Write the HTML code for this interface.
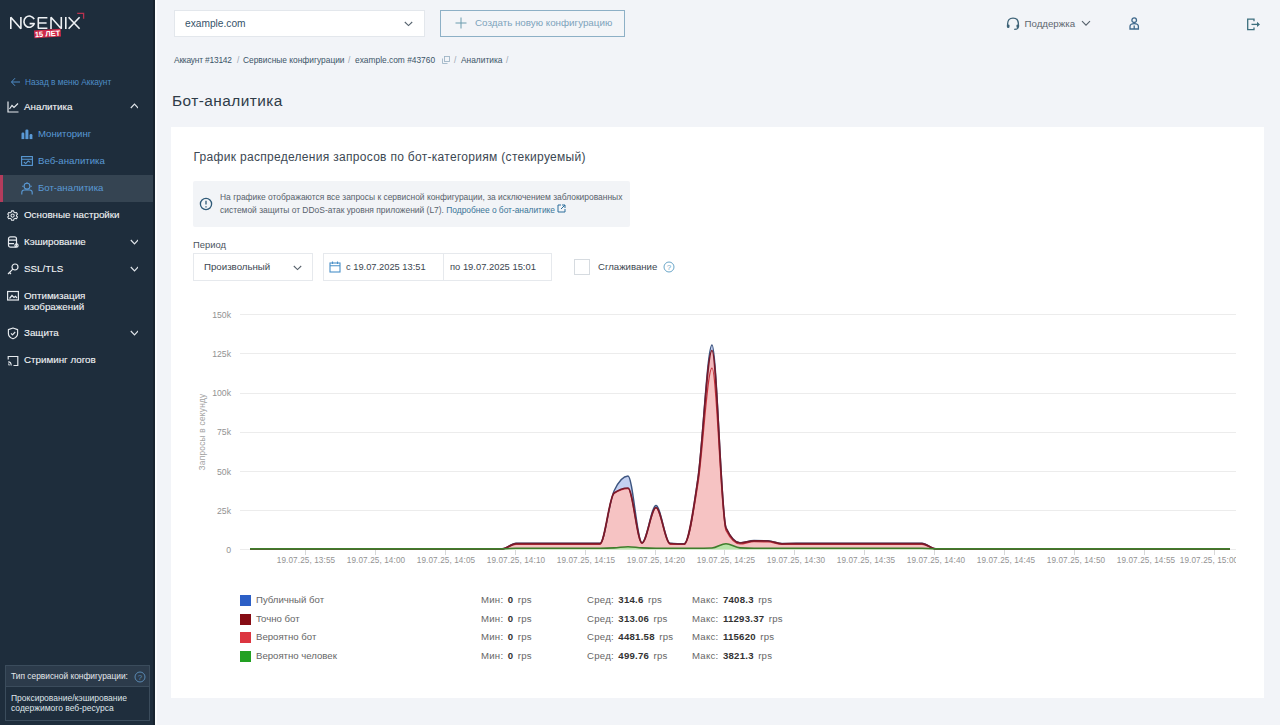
<!DOCTYPE html>
<html><head><meta charset="utf-8">
<style>
*{box-sizing:border-box;margin:0;padding:0}
html,body{width:1280px;height:725px;overflow:hidden;background:#f2f4f8;font-family:"Liberation Sans",sans-serif;}
.abs{position:absolute;white-space:nowrap}
#side{position:absolute;left:0;top:0;width:153px;height:725px;background:#1e2d3c}
#sideedge{position:absolute;left:153px;top:0;width:2px;height:725px;background:#17232f}
#sidegap{position:absolute;left:155px;top:0;width:2px;height:725px;background:#fbfcfd}
.nav{position:absolute;left:24px;font-size:9.8px;font-weight:400;color:#f2f4f6;line-height:12px;-webkit-text-stroke:0.1px #f2f4f6}
.sub{position:absolute;left:38px;font-size:9.6px;color:#5a9ad6;line-height:12px}
.ico{position:absolute}
.chev{position:absolute;left:130px;width:8px;height:8px}
.crumb{position:absolute;top:55px;font-size:8.4px;color:#3c5468;line-height:11px}
.sep{position:absolute;top:55px;font-size:8.4px;color:#9aa6b0;line-height:11px}
</style></head><body>
<div id="side"></div><div id="sideedge"></div><div id="sidegap"></div>

<!-- logo -->
<svg class="ico" style="left:0;top:0" width="100" height="45">
<g fill="none" stroke="#eef1f4" stroke-width="1.6" stroke-linejoin="bevel">
<path d="M10.8,29V17.3L20.9,28.7V17"/>
<path d="M34.2,19.2A5.4,5.6 0 1 0 34.4,23.6H29.6"/>
<path d="M47.4,17.75H38.3V28.25H47.4M38.3,23H46.6"/>
<path d="M51,29V17.3L61.3,28.7V17"/>
<path d="M65.8,17V29"/>
<path d="M68.6,17.2L79.6,28.8M79.6,17.2L68.6,28.8"/>
</g>
<path d="M77.2,13.4H83.6V18.8" fill="none" stroke="#b8324e" stroke-width="1.3"/>
<g transform="translate(47.5,33.5) rotate(-3.5)"><rect x="-13.3" y="-3.9" width="26.6" height="7.8" fill="#cf2a4a"/>
<text x="0" y="2.9" font-family="Liberation Sans" font-size="7.6" font-weight="700" fill="#fff" text-anchor="middle">15 ЛЕТ</text></g>
</svg>
<!-- back link -->
<svg class="ico" style="left:10px;top:77px" width="11" height="10"><path d="M1.5,5H10M5,1.2L1.5,5L5,8.8" fill="none" stroke="#4f8dc8" stroke-width="1"/></svg>
<div class="abs" style="left:25px;top:76.5px;font-size:8.3px;color:#4f8dc8;line-height:11px">Назад в меню Аккаунт</div>

<!-- Analytics -->
<svg class="ico" style="left:7px;top:101px" width="12" height="12"><path d="M1,0.5V11H11.5" fill="none" stroke="#e6eaee" stroke-width="1.2"/><path d="M2.5,8L5,4.5L7,6.5L11,2.5" fill="none" stroke="#e6eaee" stroke-width="1.2"/></svg>
<div class="nav" style="top:101px">Аналитика</div>
<svg class="chev" style="top:103px" width="9" height="6"><path d="M0.8,5L4.5,1.2L8.2,5" fill="none" stroke="#dfe4e9" stroke-width="1.2"/></svg>

<svg class="ico" style="left:21px;top:129px" width="12" height="11"><g fill="#5a9ad6"><rect x="0.5" y="3.5" width="2.8" height="7" rx="1.2"/><rect x="4.4" y="0.5" width="3" height="10" rx="1.2"/><rect x="8.6" y="5" width="2.8" height="5.5" rx="1.2"/></g><path d="M1,10.5H11" stroke="#1e2d3c" stroke-width="0.8"/></svg>
<div class="sub" style="top:128px">Мониторинг</div>

<svg class="ico" style="left:21px;top:155px" width="12" height="12"><g fill="none" stroke="#5a9ad6" stroke-width="1.1"><rect x="0.6" y="1.6" width="10.8" height="8.8"/><path d="M0.6,4.2H11.4M2.8,7L4.8,8.6L7.2,6L9.4,7.4"/></g></svg>
<div class="sub" style="top:155px">Веб-аналитика</div>

<div class="abs" style="left:0;top:175px;width:153px;height:27px;background:#354452"></div>
<div class="abs" style="left:0;top:175px;width:2.5px;height:27px;background:#b33c5c"></div>
<svg class="ico" style="left:21px;top:182px" width="12" height="13"><g fill="none" stroke="#5a9ad6" stroke-width="1.1"><circle cx="6" cy="4.2" r="2.9"/><path d="M2.6,4.2H1.2M9.4,4.2H10.8M6,1.3V0.2"/><path d="M0.8,12.5V10.5Q0.8,8 3.3,8H8.7Q11.2,8 11.2,10.5V12.5"/></g></svg>
<div class="sub" style="top:182px">Бот-аналитика</div>

<svg class="ico" style="left:6px;top:209px" width="13" height="13"><g fill="none" stroke="#e6eaee" stroke-width="1.2" stroke-linejoin="round" transform="translate(6.6,6.6) scale(0.86) translate(-6.5,-6.5)"><path d="M5.3,1H7.7L8.1,2.6L9.4,3.3L11,2.8L12.2,4.9L11,6L11,7.1L12.2,8.1L11,10.2L9.4,9.7L8.1,10.4L7.7,12H5.3L4.9,10.4L3.6,9.7L2,10.2L0.8,8.1L2,7.1L2,6L0.8,4.9L2,2.8L3.6,3.3L4.9,2.6Z"/><circle cx="6.5" cy="6.5" r="1.9"/></g></svg>
<div class="nav" style="top:209px">Основные настройки</div>

<svg class="ico" style="left:7px;top:236px" width="12" height="12"><g fill="none" stroke="#e6eaee" stroke-width="1.2"><rect x="1.5" y="0.8" width="8" height="10.4" rx="2"/><path d="M1.5,4.2H9.5M1.5,7.6H7"/><circle cx="9.5" cy="9.5" r="1.6"/></g></svg>
<div class="nav" style="top:236px">Кэширование</div>
<svg class="chev" style="top:239px" width="9" height="6"><path d="M0.8,1L4.5,4.8L8.2,1" fill="none" stroke="#dfe4e9" stroke-width="1.2"/></svg>

<svg class="ico" style="left:7px;top:263px" width="12" height="12"><g fill="none" stroke="#e6eaee" stroke-width="1.2"><circle cx="8" cy="4" r="3"/><path d="M5.8,6.2L1,11M2.5,9.5L4,11"/></g></svg>
<div class="nav" style="top:263px">SSL/TLS</div>
<svg class="chev" style="top:266px" width="9" height="6"><path d="M0.8,1L4.5,4.8L8.2,1" fill="none" stroke="#dfe4e9" stroke-width="1.2"/></svg>

<svg class="ico" style="left:7px;top:290px" width="12" height="12"><g fill="none" stroke="#e6eaee" stroke-width="1.2"><rect x="0.6" y="1.5" width="10.8" height="8.5"/><path d="M2.5,8.5L5,5.5L7,7.5L8.5,6.3L10,8"/></g></svg>
<div class="nav" style="top:289.6px;line-height:11px">Оптимизация<br>изображений</div>

<svg class="ico" style="left:7px;top:327px" width="12" height="13"><path d="M6,1L10.6,2.6V6.5Q10.6,10.2 6,11.8Q1.4,10.2 1.4,6.5V2.6Z M4,6.4L5.5,7.9L8.2,5" fill="none" stroke="#e6eaee" stroke-width="1.15" stroke-linejoin="round"/></svg>
<div class="nav" style="top:327px">Защита</div>
<svg class="chev" style="top:330px" width="9" height="6"><path d="M0.8,1L4.5,4.8L8.2,1" fill="none" stroke="#dfe4e9" stroke-width="1.2"/></svg>

<svg class="ico" style="left:7px;top:355px" width="12" height="12"><g fill="none" stroke="#e6eaee" stroke-width="1.15"><path d="M1.2,4.5V1.5H10.8V10.5H6.5"/><path d="M1.2,6.8Q4.2,6.8 4.2,10.5M1.2,8.8Q2.2,8.8 2.2,10.5"/></g></svg>
<div class="nav" style="top:354px">Стриминг логов</div>

<!-- service type box -->
<div class="abs" style="left:5px;top:665px;width:145px;height:56px;border:1px solid #3b4c5c;background:#1f2e3d"></div>
<div class="abs" style="left:6px;top:666px;width:143px;height:21px;background:#2c3b4b;border-bottom:1px solid #3b4c5c"></div>
<div class="abs" style="left:11px;top:671px;font-size:8.4px;color:#e4e8ec;line-height:11px">Тип сервисной конфигурации:</div>
<svg class="ico" style="left:134px;top:671px" width="12" height="12"><circle cx="6" cy="6" r="5" fill="none" stroke="#5a8ab4" stroke-width="1"/><text x="6" y="8.8" font-size="8" text-anchor="middle" fill="#5a8ab4" font-family="Liberation Sans">?</text></svg>
<div class="abs" style="left:11px;top:692.5px;font-size:8.5px;color:#dfe4e9;line-height:10.5px">Проксирование/кэширование<br>содержимого веб-ресурса</div>

<!-- top bar -->
<div class="abs" style="left:174px;top:10px;width:251px;height:27px;background:#fff;border:1px solid #e3e7ec"></div>
<div class="abs" style="left:185px;top:17.5px;font-size:10.2px;color:#35536a;line-height:12px">example.com</div>
<svg class="ico" style="left:404px;top:21px" width="9" height="6"><path d="M0.8,1L4.5,4.6L8.2,1" fill="none" stroke="#56636e" stroke-width="1.1"/></svg>

<div class="abs" style="left:440px;top:10px;width:185px;height:27px;border:1px solid #8db0c6;background:#f3f5f8"></div>
<svg class="ico" style="left:455px;top:17px" width="12" height="12"><path d="M6,0.5V11.5M0.5,6H11.5" stroke="#6a9cae" stroke-width="1"/></svg>
<div class="abs" style="left:475px;top:17px;font-size:9.8px;color:#7da3bc;line-height:12px">Создать новую конфигурацию</div>

<svg class="ico" style="left:1006px;top:17px" width="14" height="14"><g fill="none" stroke="#3d6277" stroke-width="1.3"><path d="M1.6,9.5V7Q1.6,1.2 7,1.2Q12.4,1.2 12.4,7V9.5"/><path d="M12.2,10.5Q12,12.3 8.2,12.3"/></g><g fill="#3d6277"><rect x="0.9" y="7.4" width="2.6" height="3.6" rx="1.2"/><rect x="10.5" y="7.4" width="2.6" height="3.6" rx="1.2"/></g></svg>
<div class="abs" style="left:1024.5px;top:17.6px;font-size:9.7px;color:#5e6770;line-height:12px">Поддержка</div>
<svg class="ico" style="left:1081px;top:20px" width="10" height="7"><path d="M1,1.2L5,5.2L9,1.2" fill="none" stroke="#55606b" stroke-width="1.1"/></svg>
<svg class="ico" style="left:1129px;top:17px" width="11" height="13"><g fill="none" stroke="#40698c" stroke-width="1.3"><circle cx="5.2" cy="3.2" r="2.3"/><path d="M1,12V9.5Q1,6.6 5.2,6.6Q9.4,6.6 9.4,9.5V12ZM5.2,8.5V12"/></g></svg>
<svg class="ico" style="left:1246px;top:18px" width="15" height="13"><g fill="none" stroke="#3d6f7e" stroke-width="1.3"><path d="M8,3.2V1.2H1.7V11.6H8V9.5"/><path d="M5.5,6.4H12.5"/></g><path d="M11,3.8L14,6.4L11,9Z" fill="#3d6f7e"/></svg>

<!-- breadcrumbs -->
<div class="crumb" style="left:174px;letter-spacing:-0.2px">Аккаунт #13142</div>
<div class="sep" style="left:237px">/</div>
<div class="crumb" style="left:243px">Сервисные конфигурации</div>
<div class="sep" style="left:348px">/</div>
<div class="crumb" style="left:355px">example.com #43760</div>
<svg class="ico" style="left:442px;top:56px" width="8" height="8"><g fill="none" stroke="#9fb6c6" stroke-width="0.9"><rect x="2.5" y="0.5" width="5" height="5"/><path d="M0.5,2.5V7.5H5.5"/></g></svg>
<div class="sep" style="left:454px">/</div>
<div class="crumb" style="left:461px">Аналитика</div>
<div class="sep" style="left:506px">/</div>

<div class="abs" style="left:172px;top:90.6px;font-size:15.4px;letter-spacing:0.45px;color:#2f3c48;line-height:19px">Бот-аналитика</div>

<!-- card -->
<div class="abs" style="left:171px;top:127px;width:1093px;height:571px;background:#fff"></div>
<div class="abs" style="left:193.5px;top:149.6px;font-size:12px;letter-spacing:0.3px;color:#3c4853;line-height:15px">График распределения запросов по бот-категориям (стекируемый)</div>

<div class="abs" style="left:193px;top:181px;width:437px;height:46px;background:#f2f4f7;border-radius:2px"></div>
<svg class="ico" style="left:199px;top:197px" width="14" height="14"><circle cx="7" cy="7" r="5.6" fill="none" stroke="#2f5a78" stroke-width="1.3"/><path d="M7,3.8V7.6M7,9.2V10.4" stroke="#2f5a78" stroke-width="1.3"/></svg>
<div class="abs" style="left:220px;top:191.4px;font-size:8.45px;color:#58626c;line-height:12.2px">На графике отображаются все запросы к сервисной конфигурации, за исключением заблокированных<br>системой защиты от DDoS-атак уровня приложений (L7). <span style="color:#3a7498;letter-spacing:-0.05px">Подробнее о бот-аналитике</span></div>
<svg class="ico" style="left:557px;top:204px" width="9" height="9"><g fill="none" stroke="#2d6f9c" stroke-width="1"><path d="M4,1H1V8H8V5"/><path d="M5,1H8V4M8,1L4,5"/></g></svg>

<div class="abs" style="left:193px;top:239px;font-size:9.4px;color:#4a545e;line-height:12px">Период</div>
<div class="abs" style="left:193px;top:253px;width:120px;height:28px;border:1px solid #e6e9ed;background:#fff"></div>
<div class="abs" style="left:204px;top:261px;font-size:9.7px;color:#3c4650;line-height:12px">Произвольный</div>
<svg class="ico" style="left:292.5px;top:264.5px" width="9" height="6"><path d="M0.8,1L4.5,4.6L8.2,1" fill="none" stroke="#56606a" stroke-width="1.05"/></svg>

<div class="abs" style="left:323px;top:253px;width:229px;height:28px;border:1px solid #e6e9ed;background:#fff"></div>
<div class="abs" style="left:443px;top:254px;width:1px;height:26px;background:#e6e9ed"></div>
<svg class="ico" style="left:329px;top:261px" width="12" height="12"><g fill="none" stroke="#4a90c8" stroke-width="1.1"><rect x="1" y="2" width="10" height="9"/><path d="M1,4.8H11M3.5,0.5V3M8.5,0.5V3"/></g></svg>
<div class="abs" style="left:346px;top:261px;font-size:9.3px;color:#3c4650;line-height:12px">с 19.07.2025 13:51</div>
<div class="abs" style="left:450px;top:261px;font-size:9.4px;color:#3c4650;line-height:12px">по 19.07.2025 15:01</div>

<div class="abs" style="left:574px;top:259px;width:16px;height:16px;border:1px solid #d6dbe0;background:#fff"></div>
<div class="abs" style="left:598px;top:261px;font-size:9.6px;color:#3c4650;line-height:12px">Сглаживание</div>
<svg class="ico" style="left:663px;top:261px" width="12" height="12"><circle cx="6" cy="6" r="5" fill="none" stroke="#6aa6c8" stroke-width="1"/><text x="6" y="8.8" font-size="8" text-anchor="middle" fill="#6aa6c8" font-family="Liberation Sans">?</text></svg>

<!-- chart -->
<svg class="ico" style="left:0;top:0" width="1280" height="725">
<g stroke="#ececec" stroke-width="1">
<path d="M240,314.5H1236M240,353.5H1236M240,393.5H1236M240,432.5H1236M240,471.5H1236M240,510.5H1236M240,549.5H1236"/>
</g>
<g font-family="Liberation Sans" font-size="8.7" fill="#929292" text-anchor="end">
<text x="231" y="317.5">150k</text><text x="231" y="356.8">125k</text><text x="231" y="396">100k</text><text x="231" y="435.3">75k</text><text x="231" y="474.5">50k</text><text x="231" y="513.8">25k</text><text x="231" y="553">0</text>
</g>
<text transform="translate(205,432) rotate(-90)" font-family="Liberation Sans" font-size="8.3" letter-spacing="0.25" fill="#a3a3a3" text-anchor="middle">Запросы в секунду</text>
<g stroke="#d8d8d8" stroke-width="1">
<path d="M305.5,550V555M375.5,550V555M445.5,550V555M515.5,550V555M585.5,550V555M655.5,550V555M724.5,550V555M794.5,550V555M864.5,550V555M934.5,550V555M1004.5,550V555M1074.5,550V555M1144.5,550V555M1214.5,550V555"/>
</g>
<defs><clipPath id="cp"><rect x="171" y="300" width="1065" height="280"/></clipPath></defs>
<g font-family="Liberation Sans" font-size="8.2" letter-spacing="0.1" fill="#939393" text-anchor="middle" clip-path="url(#cp)">
<text x="306" y="562.5">19.07.25, 13:55</text><text x="376" y="562.5">19.07.25, 14:00</text><text x="446" y="562.5">19.07.25, 14:05</text><text x="516" y="562.5">19.07.25, 14:10</text><text x="586" y="562.5">19.07.25, 14:15</text><text x="656" y="562.5">19.07.25, 14:20</text><text x="726" y="562.5">19.07.25, 14:25</text><text x="796" y="562.5">19.07.25, 14:30</text><text x="866" y="562.5">19.07.25, 14:35</text><text x="936" y="562.5">19.07.25, 14:40</text><text x="1006" y="562.5">19.07.25, 14:45</text><text x="1076" y="562.5">19.07.25, 14:50</text><text x="1146" y="562.5">19.07.25, 14:55</text><text x="1209" y="562.5">19.07.25, 15:00</text>
</g>
<path d="M250.0,548.9C254.7,548.9 259.3,548.9 264.0,548.9C268.7,548.9 273.3,548.9 278.0,548.9C282.7,548.9 287.3,548.9 292.0,548.9C296.7,548.9 301.3,548.9 306.0,548.9C310.7,548.9 315.3,548.9 320.0,548.9C324.7,548.9 329.3,548.9 334.0,548.9C338.7,548.9 343.3,548.9 348.0,548.9C352.7,548.9 357.3,548.9 362.0,548.9C366.7,548.9 371.3,548.9 376.0,548.9C380.7,548.9 385.3,548.9 390.0,548.9C394.7,548.9 399.3,548.9 404.0,548.9C408.7,548.9 413.3,548.9 418.0,548.9C422.7,548.9 427.3,548.9 432.0,548.9C436.7,548.9 441.3,548.9 446.0,548.9C450.7,548.9 455.3,548.9 460.0,548.9C464.7,548.9 469.3,548.9 474.0,548.9C478.7,548.9 483.3,548.9 488.0,548.9C492.7,548.9 497.3,548.9 502.0,548.9C506.7,548.9 511.3,543.3 516.0,543.3C520.7,543.3 525.3,543.3 530.0,543.3C534.7,543.3 539.3,543.3 544.0,543.3C548.7,543.3 553.3,543.3 558.0,543.3C562.7,543.3 567.3,543.3 572.0,543.3C576.7,543.3 581.3,543.3 586.0,543.3C590.7,543.3 595.3,543.3 600.0,543.3C604.7,543.3 609.3,501.0 614.0,491.0C618.7,481.0 623.3,476.0 628.0,476.0C632.7,476.0 637.3,542.7 642.0,542.7C646.7,542.7 651.3,505.5 656.0,505.5C660.7,505.5 665.3,542.9 670.0,543.2C674.7,543.5 679.3,543.7 684.0,543.7C688.7,543.7 693.3,511.3 698.0,478.2C702.7,445.1 707.3,345.0 712.0,345.0C716.7,345.0 721.3,517.7 726.0,527.7C730.7,537.7 735.3,542.7 740.0,542.7C744.7,542.7 749.3,540.5 754.0,540.5C758.7,540.5 763.3,540.6 768.0,540.7C772.7,540.8 777.3,543.5 782.0,543.5C786.7,543.5 791.3,543.3 796.0,543.3C800.7,543.3 805.3,543.3 810.0,543.3C814.7,543.3 819.3,543.3 824.0,543.3C828.7,543.3 833.3,543.3 838.0,543.3C842.7,543.3 847.3,543.3 852.0,543.3C856.7,543.3 861.3,543.3 866.0,543.3C870.7,543.3 875.3,543.3 880.0,543.3C884.7,543.3 889.3,543.3 894.0,543.3C898.7,543.3 903.3,543.3 908.0,543.3C912.7,543.3 917.3,543.3 922.0,543.3C926.7,543.3 931.3,548.9 936.0,548.9C940.7,548.9 945.3,548.9 950.0,548.9C954.7,548.9 959.3,548.9 964.0,548.9C968.7,548.9 973.3,548.9 978.0,548.9C982.7,548.9 987.3,548.9 992.0,548.9C996.7,548.9 1001.3,548.9 1006.0,548.9C1010.7,548.9 1015.3,548.9 1020.0,548.9C1024.7,548.9 1029.3,548.9 1034.0,548.9C1038.7,548.9 1043.3,548.9 1048.0,548.9C1052.7,548.9 1057.3,548.9 1062.0,548.9C1066.7,548.9 1071.3,548.9 1076.0,548.9C1080.7,548.9 1085.3,548.9 1090.0,548.9C1094.7,548.9 1099.3,548.9 1104.0,548.9C1108.7,548.9 1113.3,548.9 1118.0,548.9C1122.7,548.9 1127.3,548.9 1132.0,548.9C1136.7,548.9 1141.3,548.9 1146.0,548.9C1150.7,548.9 1155.3,548.9 1160.0,548.9C1164.7,548.9 1169.3,548.9 1174.0,548.9C1178.7,548.9 1183.3,548.9 1188.0,548.9C1192.7,548.9 1197.3,548.9 1202.0,548.9C1206.7,548.9 1211.3,548.9 1216.0,548.9C1220.7,548.9 1225.3,548.9 1230.0,548.9L1230.0,548.9C1225.3,548.9 1220.7,548.9 1216.0,548.9C1211.3,548.9 1206.7,548.9 1202.0,548.9C1197.3,548.9 1192.7,548.9 1188.0,548.9C1183.3,548.9 1178.7,548.9 1174.0,548.9C1169.3,548.9 1164.7,548.9 1160.0,548.9C1155.3,548.9 1150.7,548.9 1146.0,548.9C1141.3,548.9 1136.7,548.9 1132.0,548.9C1127.3,548.9 1122.7,548.9 1118.0,548.9C1113.3,548.9 1108.7,548.9 1104.0,548.9C1099.3,548.9 1094.7,548.9 1090.0,548.9C1085.3,548.9 1080.7,548.9 1076.0,548.9C1071.3,548.9 1066.7,548.9 1062.0,548.9C1057.3,548.9 1052.7,548.9 1048.0,548.9C1043.3,548.9 1038.7,548.9 1034.0,548.9C1029.3,548.9 1024.7,548.9 1020.0,548.9C1015.3,548.9 1010.7,548.9 1006.0,548.9C1001.3,548.9 996.7,548.9 992.0,548.9C987.3,548.9 982.7,548.9 978.0,548.9C973.3,548.9 968.7,548.9 964.0,548.9C959.3,548.9 954.7,548.9 950.0,548.9C945.3,548.9 940.7,548.9 936.0,548.9C931.3,548.9 926.7,543.6 922.0,543.6C917.3,543.6 912.7,543.6 908.0,543.6C903.3,543.6 898.7,543.6 894.0,543.6C889.3,543.6 884.7,543.6 880.0,543.6C875.3,543.6 870.7,543.6 866.0,543.6C861.3,543.6 856.7,543.6 852.0,543.6C847.3,543.6 842.7,543.6 838.0,543.6C833.3,543.6 828.7,543.6 824.0,543.6C819.3,543.6 814.7,543.6 810.0,543.6C805.3,543.6 800.7,543.6 796.0,543.6C791.3,543.6 786.7,543.8 782.0,543.8C777.3,543.8 772.7,541.1 768.0,541.0C763.3,540.9 758.7,540.8 754.0,540.8C749.3,540.8 744.7,543.0 740.0,543.0C735.3,543.0 730.7,538.0 726.0,528.0C721.3,518.0 716.7,350.5 712.0,350.5C707.3,350.5 702.7,446.2 698.0,478.5C693.3,510.8 688.7,544.0 684.0,544.0C679.3,544.0 674.7,543.8 670.0,543.5C665.3,543.2 660.7,507.5 656.0,507.5C651.3,507.5 646.7,543.0 642.0,543.0C637.3,543.0 632.7,488.0 628.0,488.0C623.3,488.0 618.7,489.7 614.0,493.0C609.3,496.3 604.7,543.6 600.0,543.6C595.3,543.6 590.7,543.6 586.0,543.6C581.3,543.6 576.7,543.6 572.0,543.6C567.3,543.6 562.7,543.6 558.0,543.6C553.3,543.6 548.7,543.6 544.0,543.6C539.3,543.6 534.7,543.6 530.0,543.6C525.3,543.6 520.7,543.6 516.0,543.6C511.3,543.6 506.7,548.9 502.0,548.9C497.3,548.9 492.7,548.9 488.0,548.9C483.3,548.9 478.7,548.9 474.0,548.9C469.3,548.9 464.7,548.9 460.0,548.9C455.3,548.9 450.7,548.9 446.0,548.9C441.3,548.9 436.7,548.9 432.0,548.9C427.3,548.9 422.7,548.9 418.0,548.9C413.3,548.9 408.7,548.9 404.0,548.9C399.3,548.9 394.7,548.9 390.0,548.9C385.3,548.9 380.7,548.9 376.0,548.9C371.3,548.9 366.7,548.9 362.0,548.9C357.3,548.9 352.7,548.9 348.0,548.9C343.3,548.9 338.7,548.9 334.0,548.9C329.3,548.9 324.7,548.9 320.0,548.9C315.3,548.9 310.7,548.9 306.0,548.9C301.3,548.9 296.7,548.9 292.0,548.9C287.3,548.9 282.7,548.9 278.0,548.9C273.3,548.9 268.7,548.9 264.0,548.9C259.3,548.9 254.7,548.9 250.0,548.9Z" fill="#c4d0f0"/>
<path d="M250.0,548.9C254.7,548.9 259.3,548.9 264.0,548.9C268.7,548.9 273.3,548.9 278.0,548.9C282.7,548.9 287.3,548.9 292.0,548.9C296.7,548.9 301.3,548.9 306.0,548.9C310.7,548.9 315.3,548.9 320.0,548.9C324.7,548.9 329.3,548.9 334.0,548.9C338.7,548.9 343.3,548.9 348.0,548.9C352.7,548.9 357.3,548.9 362.0,548.9C366.7,548.9 371.3,548.9 376.0,548.9C380.7,548.9 385.3,548.9 390.0,548.9C394.7,548.9 399.3,548.9 404.0,548.9C408.7,548.9 413.3,548.9 418.0,548.9C422.7,548.9 427.3,548.9 432.0,548.9C436.7,548.9 441.3,548.9 446.0,548.9C450.7,548.9 455.3,548.9 460.0,548.9C464.7,548.9 469.3,548.9 474.0,548.9C478.7,548.9 483.3,548.9 488.0,548.9C492.7,548.9 497.3,548.9 502.0,548.9C506.7,548.9 511.3,543.6 516.0,543.6C520.7,543.6 525.3,543.6 530.0,543.6C534.7,543.6 539.3,543.6 544.0,543.6C548.7,543.6 553.3,543.6 558.0,543.6C562.7,543.6 567.3,543.6 572.0,543.6C576.7,543.6 581.3,543.6 586.0,543.6C590.7,543.6 595.3,543.6 600.0,543.6C604.7,543.6 609.3,496.3 614.0,493.0C618.7,489.7 623.3,488.0 628.0,488.0C632.7,488.0 637.3,543.0 642.0,543.0C646.7,543.0 651.3,507.5 656.0,507.5C660.7,507.5 665.3,543.2 670.0,543.5C674.7,543.8 679.3,544.0 684.0,544.0C688.7,544.0 693.3,510.8 698.0,478.5C702.7,446.2 707.3,350.5 712.0,350.5C716.7,350.5 721.3,518.0 726.0,528.0C730.7,538.0 735.3,543.0 740.0,543.0C744.7,543.0 749.3,540.8 754.0,540.8C758.7,540.8 763.3,540.9 768.0,541.0C772.7,541.1 777.3,543.8 782.0,543.8C786.7,543.8 791.3,543.6 796.0,543.6C800.7,543.6 805.3,543.6 810.0,543.6C814.7,543.6 819.3,543.6 824.0,543.6C828.7,543.6 833.3,543.6 838.0,543.6C842.7,543.6 847.3,543.6 852.0,543.6C856.7,543.6 861.3,543.6 866.0,543.6C870.7,543.6 875.3,543.6 880.0,543.6C884.7,543.6 889.3,543.6 894.0,543.6C898.7,543.6 903.3,543.6 908.0,543.6C912.7,543.6 917.3,543.6 922.0,543.6C926.7,543.6 931.3,548.9 936.0,548.9C940.7,548.9 945.3,548.9 950.0,548.9C954.7,548.9 959.3,548.9 964.0,548.9C968.7,548.9 973.3,548.9 978.0,548.9C982.7,548.9 987.3,548.9 992.0,548.9C996.7,548.9 1001.3,548.9 1006.0,548.9C1010.7,548.9 1015.3,548.9 1020.0,548.9C1024.7,548.9 1029.3,548.9 1034.0,548.9C1038.7,548.9 1043.3,548.9 1048.0,548.9C1052.7,548.9 1057.3,548.9 1062.0,548.9C1066.7,548.9 1071.3,548.9 1076.0,548.9C1080.7,548.9 1085.3,548.9 1090.0,548.9C1094.7,548.9 1099.3,548.9 1104.0,548.9C1108.7,548.9 1113.3,548.9 1118.0,548.9C1122.7,548.9 1127.3,548.9 1132.0,548.9C1136.7,548.9 1141.3,548.9 1146.0,548.9C1150.7,548.9 1155.3,548.9 1160.0,548.9C1164.7,548.9 1169.3,548.9 1174.0,548.9C1178.7,548.9 1183.3,548.9 1188.0,548.9C1192.7,548.9 1197.3,548.9 1202.0,548.9C1206.7,548.9 1211.3,548.9 1216.0,548.9C1220.7,548.9 1225.3,548.9 1230.0,548.9L1230.0,548.9C1225.3,548.9 1220.7,548.9 1216.0,548.9C1211.3,548.9 1206.7,548.9 1202.0,548.9C1197.3,548.9 1192.7,548.9 1188.0,548.9C1183.3,548.9 1178.7,548.9 1174.0,548.9C1169.3,548.9 1164.7,548.9 1160.0,548.9C1155.3,548.9 1150.7,548.9 1146.0,548.9C1141.3,548.9 1136.7,548.9 1132.0,548.9C1127.3,548.9 1122.7,548.9 1118.0,548.9C1113.3,548.9 1108.7,548.9 1104.0,548.9C1099.3,548.9 1094.7,548.9 1090.0,548.9C1085.3,548.9 1080.7,548.9 1076.0,548.9C1071.3,548.9 1066.7,548.9 1062.0,548.9C1057.3,548.9 1052.7,548.9 1048.0,548.9C1043.3,548.9 1038.7,548.9 1034.0,548.9C1029.3,548.9 1024.7,548.9 1020.0,548.9C1015.3,548.9 1010.7,548.9 1006.0,548.9C1001.3,548.9 996.7,548.9 992.0,548.9C987.3,548.9 982.7,548.9 978.0,548.9C973.3,548.9 968.7,548.9 964.0,548.9C959.3,548.9 954.7,548.9 950.0,548.9C945.3,548.9 940.7,548.9 936.0,548.9C931.3,548.9 926.7,544.3 922.0,544.3C917.3,544.3 912.7,544.3 908.0,544.3C903.3,544.3 898.7,544.3 894.0,544.3C889.3,544.3 884.7,544.3 880.0,544.3C875.3,544.3 870.7,544.3 866.0,544.3C861.3,544.3 856.7,544.3 852.0,544.3C847.3,544.3 842.7,544.3 838.0,544.3C833.3,544.3 828.7,544.3 824.0,544.3C819.3,544.3 814.7,544.3 810.0,544.3C805.3,544.3 800.7,544.3 796.0,544.3C791.3,544.3 786.7,544.5 782.0,544.5C777.3,544.5 772.7,542.0 768.0,541.9C763.3,541.8 758.7,541.7 754.0,541.7C749.3,541.7 744.7,544.0 740.0,544.0C735.3,544.0 730.7,539.5 726.0,530.5C721.3,521.5 716.7,368.0 712.0,368.0C707.3,368.0 702.7,454.1 698.0,483.5C693.3,512.9 688.7,544.5 684.0,544.5C679.3,544.5 674.7,544.4 670.0,544.3C665.3,544.2 660.7,508.0 656.0,508.0C651.3,508.0 646.7,543.3 642.0,543.3C637.3,543.3 632.7,488.7 628.0,488.7C623.3,488.7 618.7,490.3 614.0,493.5C609.3,496.7 604.7,544.3 600.0,544.3C595.3,544.3 590.7,544.3 586.0,544.3C581.3,544.3 576.7,544.3 572.0,544.3C567.3,544.3 562.7,544.3 558.0,544.3C553.3,544.3 548.7,544.3 544.0,544.3C539.3,544.3 534.7,544.3 530.0,544.3C525.3,544.3 520.7,544.3 516.0,544.3C511.3,544.3 506.7,548.9 502.0,548.9C497.3,548.9 492.7,548.9 488.0,548.9C483.3,548.9 478.7,548.9 474.0,548.9C469.3,548.9 464.7,548.9 460.0,548.9C455.3,548.9 450.7,548.9 446.0,548.9C441.3,548.9 436.7,548.9 432.0,548.9C427.3,548.9 422.7,548.9 418.0,548.9C413.3,548.9 408.7,548.9 404.0,548.9C399.3,548.9 394.7,548.9 390.0,548.9C385.3,548.9 380.7,548.9 376.0,548.9C371.3,548.9 366.7,548.9 362.0,548.9C357.3,548.9 352.7,548.9 348.0,548.9C343.3,548.9 338.7,548.9 334.0,548.9C329.3,548.9 324.7,548.9 320.0,548.9C315.3,548.9 310.7,548.9 306.0,548.9C301.3,548.9 296.7,548.9 292.0,548.9C287.3,548.9 282.7,548.9 278.0,548.9C273.3,548.9 268.7,548.9 264.0,548.9C259.3,548.9 254.7,548.9 250.0,548.9Z" fill="#f2b8bc"/>
<path d="M250.0,548.9C254.7,548.9 259.3,548.9 264.0,548.9C268.7,548.9 273.3,548.9 278.0,548.9C282.7,548.9 287.3,548.9 292.0,548.9C296.7,548.9 301.3,548.9 306.0,548.9C310.7,548.9 315.3,548.9 320.0,548.9C324.7,548.9 329.3,548.9 334.0,548.9C338.7,548.9 343.3,548.9 348.0,548.9C352.7,548.9 357.3,548.9 362.0,548.9C366.7,548.9 371.3,548.9 376.0,548.9C380.7,548.9 385.3,548.9 390.0,548.9C394.7,548.9 399.3,548.9 404.0,548.9C408.7,548.9 413.3,548.9 418.0,548.9C422.7,548.9 427.3,548.9 432.0,548.9C436.7,548.9 441.3,548.9 446.0,548.9C450.7,548.9 455.3,548.9 460.0,548.9C464.7,548.9 469.3,548.9 474.0,548.9C478.7,548.9 483.3,548.9 488.0,548.9C492.7,548.9 497.3,548.9 502.0,548.9C506.7,548.9 511.3,544.3 516.0,544.3C520.7,544.3 525.3,544.3 530.0,544.3C534.7,544.3 539.3,544.3 544.0,544.3C548.7,544.3 553.3,544.3 558.0,544.3C562.7,544.3 567.3,544.3 572.0,544.3C576.7,544.3 581.3,544.3 586.0,544.3C590.7,544.3 595.3,544.3 600.0,544.3C604.7,544.3 609.3,496.7 614.0,493.5C618.7,490.3 623.3,488.7 628.0,488.7C632.7,488.7 637.3,543.3 642.0,543.3C646.7,543.3 651.3,508.0 656.0,508.0C660.7,508.0 665.3,544.2 670.0,544.3C674.7,544.4 679.3,544.5 684.0,544.5C688.7,544.5 693.3,512.9 698.0,483.5C702.7,454.1 707.3,368.0 712.0,368.0C716.7,368.0 721.3,521.5 726.0,530.5C730.7,539.5 735.3,544.0 740.0,544.0C744.7,544.0 749.3,541.7 754.0,541.7C758.7,541.7 763.3,541.8 768.0,541.9C772.7,542.0 777.3,544.5 782.0,544.5C786.7,544.5 791.3,544.3 796.0,544.3C800.7,544.3 805.3,544.3 810.0,544.3C814.7,544.3 819.3,544.3 824.0,544.3C828.7,544.3 833.3,544.3 838.0,544.3C842.7,544.3 847.3,544.3 852.0,544.3C856.7,544.3 861.3,544.3 866.0,544.3C870.7,544.3 875.3,544.3 880.0,544.3C884.7,544.3 889.3,544.3 894.0,544.3C898.7,544.3 903.3,544.3 908.0,544.3C912.7,544.3 917.3,544.3 922.0,544.3C926.7,544.3 931.3,548.9 936.0,548.9C940.7,548.9 945.3,548.9 950.0,548.9C954.7,548.9 959.3,548.9 964.0,548.9C968.7,548.9 973.3,548.9 978.0,548.9C982.7,548.9 987.3,548.9 992.0,548.9C996.7,548.9 1001.3,548.9 1006.0,548.9C1010.7,548.9 1015.3,548.9 1020.0,548.9C1024.7,548.9 1029.3,548.9 1034.0,548.9C1038.7,548.9 1043.3,548.9 1048.0,548.9C1052.7,548.9 1057.3,548.9 1062.0,548.9C1066.7,548.9 1071.3,548.9 1076.0,548.9C1080.7,548.9 1085.3,548.9 1090.0,548.9C1094.7,548.9 1099.3,548.9 1104.0,548.9C1108.7,548.9 1113.3,548.9 1118.0,548.9C1122.7,548.9 1127.3,548.9 1132.0,548.9C1136.7,548.9 1141.3,548.9 1146.0,548.9C1150.7,548.9 1155.3,548.9 1160.0,548.9C1164.7,548.9 1169.3,548.9 1174.0,548.9C1178.7,548.9 1183.3,548.9 1188.0,548.9C1192.7,548.9 1197.3,548.9 1202.0,548.9C1206.7,548.9 1211.3,548.9 1216.0,548.9C1220.7,548.9 1225.3,548.9 1230.0,548.9L1230.0,548.9C1225.3,548.9 1220.7,548.9 1216.0,548.9C1211.3,548.9 1206.7,548.9 1202.0,548.9C1197.3,548.9 1192.7,548.9 1188.0,548.9C1183.3,548.9 1178.7,548.9 1174.0,548.9C1169.3,548.9 1164.7,548.9 1160.0,548.9C1155.3,548.9 1150.7,548.9 1146.0,548.9C1141.3,548.9 1136.7,548.9 1132.0,548.9C1127.3,548.9 1122.7,548.9 1118.0,548.9C1113.3,548.9 1108.7,548.9 1104.0,548.9C1099.3,548.9 1094.7,548.9 1090.0,548.9C1085.3,548.9 1080.7,548.9 1076.0,548.9C1071.3,548.9 1066.7,548.9 1062.0,548.9C1057.3,548.9 1052.7,548.9 1048.0,548.9C1043.3,548.9 1038.7,548.9 1034.0,548.9C1029.3,548.9 1024.7,548.9 1020.0,548.9C1015.3,548.9 1010.7,548.9 1006.0,548.9C1001.3,548.9 996.7,548.9 992.0,548.9C987.3,548.9 982.7,548.9 978.0,548.9C973.3,548.9 968.7,548.9 964.0,548.9C959.3,548.9 954.7,548.9 950.0,548.9C945.3,548.9 940.7,548.9 936.0,548.9C931.3,548.9 926.7,548.2 922.0,548.2C917.3,548.2 912.7,548.2 908.0,548.2C903.3,548.2 898.7,548.2 894.0,548.2C889.3,548.2 884.7,548.2 880.0,548.2C875.3,548.2 870.7,548.2 866.0,548.2C861.3,548.2 856.7,548.2 852.0,548.2C847.3,548.2 842.7,548.2 838.0,548.2C833.3,548.2 828.7,548.2 824.0,548.2C819.3,548.2 814.7,548.2 810.0,548.2C805.3,548.2 800.7,548.2 796.0,548.2C791.3,548.2 786.7,548.2 782.0,548.2C777.3,548.2 772.7,548.2 768.0,548.2C763.3,548.2 758.7,548.2 754.0,548.2C749.3,548.2 744.7,548.1 740.0,547.9C735.3,547.7 730.7,543.7 726.0,543.7C721.3,543.7 716.7,547.9 712.0,548.0C707.3,548.1 702.7,548.2 698.0,548.2C693.3,548.2 688.7,548.2 684.0,548.2C679.3,548.2 674.7,548.2 670.0,548.2C665.3,548.2 660.7,548.2 656.0,548.2C651.3,548.2 646.7,548.1 642.0,547.9C637.3,547.7 632.7,546.7 628.0,546.7C623.3,546.7 618.7,547.7 614.0,547.9C609.3,548.1 604.7,548.2 600.0,548.2C595.3,548.2 590.7,548.2 586.0,548.2C581.3,548.2 576.7,548.2 572.0,548.2C567.3,548.2 562.7,548.2 558.0,548.2C553.3,548.2 548.7,548.2 544.0,548.2C539.3,548.2 534.7,548.2 530.0,548.2C525.3,548.2 520.7,548.2 516.0,548.2C511.3,548.2 506.7,548.9 502.0,548.9C497.3,548.9 492.7,548.9 488.0,548.9C483.3,548.9 478.7,548.9 474.0,548.9C469.3,548.9 464.7,548.9 460.0,548.9C455.3,548.9 450.7,548.9 446.0,548.9C441.3,548.9 436.7,548.9 432.0,548.9C427.3,548.9 422.7,548.9 418.0,548.9C413.3,548.9 408.7,548.9 404.0,548.9C399.3,548.9 394.7,548.9 390.0,548.9C385.3,548.9 380.7,548.9 376.0,548.9C371.3,548.9 366.7,548.9 362.0,548.9C357.3,548.9 352.7,548.9 348.0,548.9C343.3,548.9 338.7,548.9 334.0,548.9C329.3,548.9 324.7,548.9 320.0,548.9C315.3,548.9 310.7,548.9 306.0,548.9C301.3,548.9 296.7,548.9 292.0,548.9C287.3,548.9 282.7,548.9 278.0,548.9C273.3,548.9 268.7,548.9 264.0,548.9C259.3,548.9 254.7,548.9 250.0,548.9Z" fill="#f6c3c3"/>
<path d="M250.0,548.9C254.7,548.9 259.3,548.9 264.0,548.9C268.7,548.9 273.3,548.9 278.0,548.9C282.7,548.9 287.3,548.9 292.0,548.9C296.7,548.9 301.3,548.9 306.0,548.9C310.7,548.9 315.3,548.9 320.0,548.9C324.7,548.9 329.3,548.9 334.0,548.9C338.7,548.9 343.3,548.9 348.0,548.9C352.7,548.9 357.3,548.9 362.0,548.9C366.7,548.9 371.3,548.9 376.0,548.9C380.7,548.9 385.3,548.9 390.0,548.9C394.7,548.9 399.3,548.9 404.0,548.9C408.7,548.9 413.3,548.9 418.0,548.9C422.7,548.9 427.3,548.9 432.0,548.9C436.7,548.9 441.3,548.9 446.0,548.9C450.7,548.9 455.3,548.9 460.0,548.9C464.7,548.9 469.3,548.9 474.0,548.9C478.7,548.9 483.3,548.9 488.0,548.9C492.7,548.9 497.3,548.9 502.0,548.9C506.7,548.9 511.3,548.2 516.0,548.2C520.7,548.2 525.3,548.2 530.0,548.2C534.7,548.2 539.3,548.2 544.0,548.2C548.7,548.2 553.3,548.2 558.0,548.2C562.7,548.2 567.3,548.2 572.0,548.2C576.7,548.2 581.3,548.2 586.0,548.2C590.7,548.2 595.3,548.2 600.0,548.2C604.7,548.2 609.3,548.1 614.0,547.9C618.7,547.7 623.3,546.7 628.0,546.7C632.7,546.7 637.3,547.7 642.0,547.9C646.7,548.1 651.3,548.2 656.0,548.2C660.7,548.2 665.3,548.2 670.0,548.2C674.7,548.2 679.3,548.2 684.0,548.2C688.7,548.2 693.3,548.2 698.0,548.2C702.7,548.2 707.3,548.1 712.0,548.0C716.7,547.9 721.3,543.7 726.0,543.7C730.7,543.7 735.3,547.7 740.0,547.9C744.7,548.1 749.3,548.2 754.0,548.2C758.7,548.2 763.3,548.2 768.0,548.2C772.7,548.2 777.3,548.2 782.0,548.2C786.7,548.2 791.3,548.2 796.0,548.2C800.7,548.2 805.3,548.2 810.0,548.2C814.7,548.2 819.3,548.2 824.0,548.2C828.7,548.2 833.3,548.2 838.0,548.2C842.7,548.2 847.3,548.2 852.0,548.2C856.7,548.2 861.3,548.2 866.0,548.2C870.7,548.2 875.3,548.2 880.0,548.2C884.7,548.2 889.3,548.2 894.0,548.2C898.7,548.2 903.3,548.2 908.0,548.2C912.7,548.2 917.3,548.2 922.0,548.2C926.7,548.2 931.3,548.9 936.0,548.9C940.7,548.9 945.3,548.9 950.0,548.9C954.7,548.9 959.3,548.9 964.0,548.9C968.7,548.9 973.3,548.9 978.0,548.9C982.7,548.9 987.3,548.9 992.0,548.9C996.7,548.9 1001.3,548.9 1006.0,548.9C1010.7,548.9 1015.3,548.9 1020.0,548.9C1024.7,548.9 1029.3,548.9 1034.0,548.9C1038.7,548.9 1043.3,548.9 1048.0,548.9C1052.7,548.9 1057.3,548.9 1062.0,548.9C1066.7,548.9 1071.3,548.9 1076.0,548.9C1080.7,548.9 1085.3,548.9 1090.0,548.9C1094.7,548.9 1099.3,548.9 1104.0,548.9C1108.7,548.9 1113.3,548.9 1118.0,548.9C1122.7,548.9 1127.3,548.9 1132.0,548.9C1136.7,548.9 1141.3,548.9 1146.0,548.9C1150.7,548.9 1155.3,548.9 1160.0,548.9C1164.7,548.9 1169.3,548.9 1174.0,548.9C1178.7,548.9 1183.3,548.9 1188.0,548.9C1192.7,548.9 1197.3,548.9 1202.0,548.9C1206.7,548.9 1211.3,548.9 1216.0,548.9C1220.7,548.9 1225.3,548.9 1230.0,548.9L1230.0,549.5C1225.3,549.5 1220.7,549.5 1216.0,549.5C1211.3,549.5 1206.7,549.5 1202.0,549.5C1197.3,549.5 1192.7,549.5 1188.0,549.5C1183.3,549.5 1178.7,549.5 1174.0,549.5C1169.3,549.5 1164.7,549.5 1160.0,549.5C1155.3,549.5 1150.7,549.5 1146.0,549.5C1141.3,549.5 1136.7,549.5 1132.0,549.5C1127.3,549.5 1122.7,549.5 1118.0,549.5C1113.3,549.5 1108.7,549.5 1104.0,549.5C1099.3,549.5 1094.7,549.5 1090.0,549.5C1085.3,549.5 1080.7,549.5 1076.0,549.5C1071.3,549.5 1066.7,549.5 1062.0,549.5C1057.3,549.5 1052.7,549.5 1048.0,549.5C1043.3,549.5 1038.7,549.5 1034.0,549.5C1029.3,549.5 1024.7,549.5 1020.0,549.5C1015.3,549.5 1010.7,549.5 1006.0,549.5C1001.3,549.5 996.7,549.5 992.0,549.5C987.3,549.5 982.7,549.5 978.0,549.5C973.3,549.5 968.7,549.5 964.0,549.5C959.3,549.5 954.7,549.5 950.0,549.5C945.3,549.5 940.7,549.5 936.0,549.5C931.3,549.5 926.7,549.5 922.0,549.5C917.3,549.5 912.7,549.5 908.0,549.5C903.3,549.5 898.7,549.5 894.0,549.5C889.3,549.5 884.7,549.5 880.0,549.5C875.3,549.5 870.7,549.5 866.0,549.5C861.3,549.5 856.7,549.5 852.0,549.5C847.3,549.5 842.7,549.5 838.0,549.5C833.3,549.5 828.7,549.5 824.0,549.5C819.3,549.5 814.7,549.5 810.0,549.5C805.3,549.5 800.7,549.5 796.0,549.5C791.3,549.5 786.7,549.5 782.0,549.5C777.3,549.5 772.7,549.5 768.0,549.5C763.3,549.5 758.7,549.5 754.0,549.5C749.3,549.5 744.7,549.5 740.0,549.5C735.3,549.5 730.7,549.5 726.0,549.5C721.3,549.5 716.7,549.5 712.0,549.5C707.3,549.5 702.7,549.5 698.0,549.5C693.3,549.5 688.7,549.5 684.0,549.5C679.3,549.5 674.7,549.5 670.0,549.5C665.3,549.5 660.7,549.5 656.0,549.5C651.3,549.5 646.7,549.5 642.0,549.5C637.3,549.5 632.7,549.5 628.0,549.5C623.3,549.5 618.7,549.5 614.0,549.5C609.3,549.5 604.7,549.5 600.0,549.5C595.3,549.5 590.7,549.5 586.0,549.5C581.3,549.5 576.7,549.5 572.0,549.5C567.3,549.5 562.7,549.5 558.0,549.5C553.3,549.5 548.7,549.5 544.0,549.5C539.3,549.5 534.7,549.5 530.0,549.5C525.3,549.5 520.7,549.5 516.0,549.5C511.3,549.5 506.7,549.5 502.0,549.5C497.3,549.5 492.7,549.5 488.0,549.5C483.3,549.5 478.7,549.5 474.0,549.5C469.3,549.5 464.7,549.5 460.0,549.5C455.3,549.5 450.7,549.5 446.0,549.5C441.3,549.5 436.7,549.5 432.0,549.5C427.3,549.5 422.7,549.5 418.0,549.5C413.3,549.5 408.7,549.5 404.0,549.5C399.3,549.5 394.7,549.5 390.0,549.5C385.3,549.5 380.7,549.5 376.0,549.5C371.3,549.5 366.7,549.5 362.0,549.5C357.3,549.5 352.7,549.5 348.0,549.5C343.3,549.5 338.7,549.5 334.0,549.5C329.3,549.5 324.7,549.5 320.0,549.5C315.3,549.5 310.7,549.5 306.0,549.5C301.3,549.5 296.7,549.5 292.0,549.5C287.3,549.5 282.7,549.5 278.0,549.5C273.3,549.5 268.7,549.5 264.0,549.5C259.3,549.5 254.7,549.5 250.0,549.5Z" fill="#b8e3a8"/>
<path d="M250.0,548.9C254.7,548.9 259.3,548.9 264.0,548.9C268.7,548.9 273.3,548.9 278.0,548.9C282.7,548.9 287.3,548.9 292.0,548.9C296.7,548.9 301.3,548.9 306.0,548.9C310.7,548.9 315.3,548.9 320.0,548.9C324.7,548.9 329.3,548.9 334.0,548.9C338.7,548.9 343.3,548.9 348.0,548.9C352.7,548.9 357.3,548.9 362.0,548.9C366.7,548.9 371.3,548.9 376.0,548.9C380.7,548.9 385.3,548.9 390.0,548.9C394.7,548.9 399.3,548.9 404.0,548.9C408.7,548.9 413.3,548.9 418.0,548.9C422.7,548.9 427.3,548.9 432.0,548.9C436.7,548.9 441.3,548.9 446.0,548.9C450.7,548.9 455.3,548.9 460.0,548.9C464.7,548.9 469.3,548.9 474.0,548.9C478.7,548.9 483.3,548.9 488.0,548.9C492.7,548.9 497.3,548.9 502.0,548.9C506.7,548.9 511.3,543.3 516.0,543.3C520.7,543.3 525.3,543.3 530.0,543.3C534.7,543.3 539.3,543.3 544.0,543.3C548.7,543.3 553.3,543.3 558.0,543.3C562.7,543.3 567.3,543.3 572.0,543.3C576.7,543.3 581.3,543.3 586.0,543.3C590.7,543.3 595.3,543.3 600.0,543.3C604.7,543.3 609.3,501.0 614.0,491.0C618.7,481.0 623.3,476.0 628.0,476.0C632.7,476.0 637.3,542.7 642.0,542.7C646.7,542.7 651.3,505.5 656.0,505.5C660.7,505.5 665.3,542.9 670.0,543.2C674.7,543.5 679.3,543.7 684.0,543.7C688.7,543.7 693.3,511.3 698.0,478.2C702.7,445.1 707.3,345.0 712.0,345.0C716.7,345.0 721.3,517.7 726.0,527.7C730.7,537.7 735.3,542.7 740.0,542.7C744.7,542.7 749.3,540.5 754.0,540.5C758.7,540.5 763.3,540.6 768.0,540.7C772.7,540.8 777.3,543.5 782.0,543.5C786.7,543.5 791.3,543.3 796.0,543.3C800.7,543.3 805.3,543.3 810.0,543.3C814.7,543.3 819.3,543.3 824.0,543.3C828.7,543.3 833.3,543.3 838.0,543.3C842.7,543.3 847.3,543.3 852.0,543.3C856.7,543.3 861.3,543.3 866.0,543.3C870.7,543.3 875.3,543.3 880.0,543.3C884.7,543.3 889.3,543.3 894.0,543.3C898.7,543.3 903.3,543.3 908.0,543.3C912.7,543.3 917.3,543.3 922.0,543.3C926.7,543.3 931.3,548.9 936.0,548.9C940.7,548.9 945.3,548.9 950.0,548.9C954.7,548.9 959.3,548.9 964.0,548.9C968.7,548.9 973.3,548.9 978.0,548.9C982.7,548.9 987.3,548.9 992.0,548.9C996.7,548.9 1001.3,548.9 1006.0,548.9C1010.7,548.9 1015.3,548.9 1020.0,548.9C1024.7,548.9 1029.3,548.9 1034.0,548.9C1038.7,548.9 1043.3,548.9 1048.0,548.9C1052.7,548.9 1057.3,548.9 1062.0,548.9C1066.7,548.9 1071.3,548.9 1076.0,548.9C1080.7,548.9 1085.3,548.9 1090.0,548.9C1094.7,548.9 1099.3,548.9 1104.0,548.9C1108.7,548.9 1113.3,548.9 1118.0,548.9C1122.7,548.9 1127.3,548.9 1132.0,548.9C1136.7,548.9 1141.3,548.9 1146.0,548.9C1150.7,548.9 1155.3,548.9 1160.0,548.9C1164.7,548.9 1169.3,548.9 1174.0,548.9C1178.7,548.9 1183.3,548.9 1188.0,548.9C1192.7,548.9 1197.3,548.9 1202.0,548.9C1206.7,548.9 1211.3,548.9 1216.0,548.9C1220.7,548.9 1225.3,548.9 1230.0,548.9" fill="none" stroke="#3d5580" stroke-width="1.4"/>
<path d="M250.0,548.9C254.7,548.9 259.3,548.9 264.0,548.9C268.7,548.9 273.3,548.9 278.0,548.9C282.7,548.9 287.3,548.9 292.0,548.9C296.7,548.9 301.3,548.9 306.0,548.9C310.7,548.9 315.3,548.9 320.0,548.9C324.7,548.9 329.3,548.9 334.0,548.9C338.7,548.9 343.3,548.9 348.0,548.9C352.7,548.9 357.3,548.9 362.0,548.9C366.7,548.9 371.3,548.9 376.0,548.9C380.7,548.9 385.3,548.9 390.0,548.9C394.7,548.9 399.3,548.9 404.0,548.9C408.7,548.9 413.3,548.9 418.0,548.9C422.7,548.9 427.3,548.9 432.0,548.9C436.7,548.9 441.3,548.9 446.0,548.9C450.7,548.9 455.3,548.9 460.0,548.9C464.7,548.9 469.3,548.9 474.0,548.9C478.7,548.9 483.3,548.9 488.0,548.9C492.7,548.9 497.3,548.9 502.0,548.9C506.7,548.9 511.3,544.3 516.0,544.3C520.7,544.3 525.3,544.3 530.0,544.3C534.7,544.3 539.3,544.3 544.0,544.3C548.7,544.3 553.3,544.3 558.0,544.3C562.7,544.3 567.3,544.3 572.0,544.3C576.7,544.3 581.3,544.3 586.0,544.3C590.7,544.3 595.3,544.3 600.0,544.3C604.7,544.3 609.3,496.7 614.0,493.5C618.7,490.3 623.3,488.7 628.0,488.7C632.7,488.7 637.3,543.3 642.0,543.3C646.7,543.3 651.3,508.0 656.0,508.0C660.7,508.0 665.3,544.2 670.0,544.3C674.7,544.4 679.3,544.5 684.0,544.5C688.7,544.5 693.3,512.9 698.0,483.5C702.7,454.1 707.3,368.0 712.0,368.0C716.7,368.0 721.3,521.5 726.0,530.5C730.7,539.5 735.3,544.0 740.0,544.0C744.7,544.0 749.3,541.7 754.0,541.7C758.7,541.7 763.3,541.8 768.0,541.9C772.7,542.0 777.3,544.5 782.0,544.5C786.7,544.5 791.3,544.3 796.0,544.3C800.7,544.3 805.3,544.3 810.0,544.3C814.7,544.3 819.3,544.3 824.0,544.3C828.7,544.3 833.3,544.3 838.0,544.3C842.7,544.3 847.3,544.3 852.0,544.3C856.7,544.3 861.3,544.3 866.0,544.3C870.7,544.3 875.3,544.3 880.0,544.3C884.7,544.3 889.3,544.3 894.0,544.3C898.7,544.3 903.3,544.3 908.0,544.3C912.7,544.3 917.3,544.3 922.0,544.3C926.7,544.3 931.3,548.9 936.0,548.9C940.7,548.9 945.3,548.9 950.0,548.9C954.7,548.9 959.3,548.9 964.0,548.9C968.7,548.9 973.3,548.9 978.0,548.9C982.7,548.9 987.3,548.9 992.0,548.9C996.7,548.9 1001.3,548.9 1006.0,548.9C1010.7,548.9 1015.3,548.9 1020.0,548.9C1024.7,548.9 1029.3,548.9 1034.0,548.9C1038.7,548.9 1043.3,548.9 1048.0,548.9C1052.7,548.9 1057.3,548.9 1062.0,548.9C1066.7,548.9 1071.3,548.9 1076.0,548.9C1080.7,548.9 1085.3,548.9 1090.0,548.9C1094.7,548.9 1099.3,548.9 1104.0,548.9C1108.7,548.9 1113.3,548.9 1118.0,548.9C1122.7,548.9 1127.3,548.9 1132.0,548.9C1136.7,548.9 1141.3,548.9 1146.0,548.9C1150.7,548.9 1155.3,548.9 1160.0,548.9C1164.7,548.9 1169.3,548.9 1174.0,548.9C1178.7,548.9 1183.3,548.9 1188.0,548.9C1192.7,548.9 1197.3,548.9 1202.0,548.9C1206.7,548.9 1211.3,548.9 1216.0,548.9C1220.7,548.9 1225.3,548.9 1230.0,548.9" fill="none" stroke="#c8323c" stroke-width="1.2"/>
<path d="M250.0,548.9C254.7,548.9 259.3,548.9 264.0,548.9C268.7,548.9 273.3,548.9 278.0,548.9C282.7,548.9 287.3,548.9 292.0,548.9C296.7,548.9 301.3,548.9 306.0,548.9C310.7,548.9 315.3,548.9 320.0,548.9C324.7,548.9 329.3,548.9 334.0,548.9C338.7,548.9 343.3,548.9 348.0,548.9C352.7,548.9 357.3,548.9 362.0,548.9C366.7,548.9 371.3,548.9 376.0,548.9C380.7,548.9 385.3,548.9 390.0,548.9C394.7,548.9 399.3,548.9 404.0,548.9C408.7,548.9 413.3,548.9 418.0,548.9C422.7,548.9 427.3,548.9 432.0,548.9C436.7,548.9 441.3,548.9 446.0,548.9C450.7,548.9 455.3,548.9 460.0,548.9C464.7,548.9 469.3,548.9 474.0,548.9C478.7,548.9 483.3,548.9 488.0,548.9C492.7,548.9 497.3,548.9 502.0,548.9C506.7,548.9 511.3,543.6 516.0,543.6C520.7,543.6 525.3,543.6 530.0,543.6C534.7,543.6 539.3,543.6 544.0,543.6C548.7,543.6 553.3,543.6 558.0,543.6C562.7,543.6 567.3,543.6 572.0,543.6C576.7,543.6 581.3,543.6 586.0,543.6C590.7,543.6 595.3,543.6 600.0,543.6C604.7,543.6 609.3,496.3 614.0,493.0C618.7,489.7 623.3,488.0 628.0,488.0C632.7,488.0 637.3,543.0 642.0,543.0C646.7,543.0 651.3,507.5 656.0,507.5C660.7,507.5 665.3,543.2 670.0,543.5C674.7,543.8 679.3,544.0 684.0,544.0C688.7,544.0 693.3,510.8 698.0,478.5C702.7,446.2 707.3,350.5 712.0,350.5C716.7,350.5 721.3,518.0 726.0,528.0C730.7,538.0 735.3,543.0 740.0,543.0C744.7,543.0 749.3,540.8 754.0,540.8C758.7,540.8 763.3,540.9 768.0,541.0C772.7,541.1 777.3,543.8 782.0,543.8C786.7,543.8 791.3,543.6 796.0,543.6C800.7,543.6 805.3,543.6 810.0,543.6C814.7,543.6 819.3,543.6 824.0,543.6C828.7,543.6 833.3,543.6 838.0,543.6C842.7,543.6 847.3,543.6 852.0,543.6C856.7,543.6 861.3,543.6 866.0,543.6C870.7,543.6 875.3,543.6 880.0,543.6C884.7,543.6 889.3,543.6 894.0,543.6C898.7,543.6 903.3,543.6 908.0,543.6C912.7,543.6 917.3,543.6 922.0,543.6C926.7,543.6 931.3,548.9 936.0,548.9C940.7,548.9 945.3,548.9 950.0,548.9C954.7,548.9 959.3,548.9 964.0,548.9C968.7,548.9 973.3,548.9 978.0,548.9C982.7,548.9 987.3,548.9 992.0,548.9C996.7,548.9 1001.3,548.9 1006.0,548.9C1010.7,548.9 1015.3,548.9 1020.0,548.9C1024.7,548.9 1029.3,548.9 1034.0,548.9C1038.7,548.9 1043.3,548.9 1048.0,548.9C1052.7,548.9 1057.3,548.9 1062.0,548.9C1066.7,548.9 1071.3,548.9 1076.0,548.9C1080.7,548.9 1085.3,548.9 1090.0,548.9C1094.7,548.9 1099.3,548.9 1104.0,548.9C1108.7,548.9 1113.3,548.9 1118.0,548.9C1122.7,548.9 1127.3,548.9 1132.0,548.9C1136.7,548.9 1141.3,548.9 1146.0,548.9C1150.7,548.9 1155.3,548.9 1160.0,548.9C1164.7,548.9 1169.3,548.9 1174.0,548.9C1178.7,548.9 1183.3,548.9 1188.0,548.9C1192.7,548.9 1197.3,548.9 1202.0,548.9C1206.7,548.9 1211.3,548.9 1216.0,548.9C1220.7,548.9 1225.3,548.9 1230.0,548.9" fill="none" stroke="#781a2a" stroke-width="1.7"/>
<path d="M250.0,548.9C254.7,548.9 259.3,548.9 264.0,548.9C268.7,548.9 273.3,548.9 278.0,548.9C282.7,548.9 287.3,548.9 292.0,548.9C296.7,548.9 301.3,548.9 306.0,548.9C310.7,548.9 315.3,548.9 320.0,548.9C324.7,548.9 329.3,548.9 334.0,548.9C338.7,548.9 343.3,548.9 348.0,548.9C352.7,548.9 357.3,548.9 362.0,548.9C366.7,548.9 371.3,548.9 376.0,548.9C380.7,548.9 385.3,548.9 390.0,548.9C394.7,548.9 399.3,548.9 404.0,548.9C408.7,548.9 413.3,548.9 418.0,548.9C422.7,548.9 427.3,548.9 432.0,548.9C436.7,548.9 441.3,548.9 446.0,548.9C450.7,548.9 455.3,548.9 460.0,548.9C464.7,548.9 469.3,548.9 474.0,548.9C478.7,548.9 483.3,548.9 488.0,548.9C492.7,548.9 497.3,548.9 502.0,548.9C506.7,548.9 511.3,548.2 516.0,548.2C520.7,548.2 525.3,548.2 530.0,548.2C534.7,548.2 539.3,548.2 544.0,548.2C548.7,548.2 553.3,548.2 558.0,548.2C562.7,548.2 567.3,548.2 572.0,548.2C576.7,548.2 581.3,548.2 586.0,548.2C590.7,548.2 595.3,548.2 600.0,548.2C604.7,548.2 609.3,548.1 614.0,547.9C618.7,547.7 623.3,546.7 628.0,546.7C632.7,546.7 637.3,547.7 642.0,547.9C646.7,548.1 651.3,548.2 656.0,548.2C660.7,548.2 665.3,548.2 670.0,548.2C674.7,548.2 679.3,548.2 684.0,548.2C688.7,548.2 693.3,548.2 698.0,548.2C702.7,548.2 707.3,548.1 712.0,548.0C716.7,547.9 721.3,543.7 726.0,543.7C730.7,543.7 735.3,547.7 740.0,547.9C744.7,548.1 749.3,548.2 754.0,548.2C758.7,548.2 763.3,548.2 768.0,548.2C772.7,548.2 777.3,548.2 782.0,548.2C786.7,548.2 791.3,548.2 796.0,548.2C800.7,548.2 805.3,548.2 810.0,548.2C814.7,548.2 819.3,548.2 824.0,548.2C828.7,548.2 833.3,548.2 838.0,548.2C842.7,548.2 847.3,548.2 852.0,548.2C856.7,548.2 861.3,548.2 866.0,548.2C870.7,548.2 875.3,548.2 880.0,548.2C884.7,548.2 889.3,548.2 894.0,548.2C898.7,548.2 903.3,548.2 908.0,548.2C912.7,548.2 917.3,548.2 922.0,548.2C926.7,548.2 931.3,548.9 936.0,548.9C940.7,548.9 945.3,548.9 950.0,548.9C954.7,548.9 959.3,548.9 964.0,548.9C968.7,548.9 973.3,548.9 978.0,548.9C982.7,548.9 987.3,548.9 992.0,548.9C996.7,548.9 1001.3,548.9 1006.0,548.9C1010.7,548.9 1015.3,548.9 1020.0,548.9C1024.7,548.9 1029.3,548.9 1034.0,548.9C1038.7,548.9 1043.3,548.9 1048.0,548.9C1052.7,548.9 1057.3,548.9 1062.0,548.9C1066.7,548.9 1071.3,548.9 1076.0,548.9C1080.7,548.9 1085.3,548.9 1090.0,548.9C1094.7,548.9 1099.3,548.9 1104.0,548.9C1108.7,548.9 1113.3,548.9 1118.0,548.9C1122.7,548.9 1127.3,548.9 1132.0,548.9C1136.7,548.9 1141.3,548.9 1146.0,548.9C1150.7,548.9 1155.3,548.9 1160.0,548.9C1164.7,548.9 1169.3,548.9 1174.0,548.9C1178.7,548.9 1183.3,548.9 1188.0,548.9C1192.7,548.9 1197.3,548.9 1202.0,548.9C1206.7,548.9 1211.3,548.9 1216.0,548.9C1220.7,548.9 1225.3,548.9 1230.0,548.9" fill="none" stroke="#3f7d2c" stroke-width="1.6"/>
</svg>

<!-- legend -->
<div class="abs" style="left:240px;top:595px;width:11px;height:11px;background:#2c5fc6"></div>
<div class="abs" style="left:240px;top:614px;width:11px;height:11px;background:#860c14"></div>
<div class="abs" style="left:240px;top:632px;width:11px;height:11px;background:#dc3540"></div>
<div class="abs" style="left:240px;top:651px;width:11px;height:11px;background:#22a022"></div>
<div class="abs" style="left:256px;top:594px;font-size:9.6px;color:#666;line-height:12px">Публичный бот</div>
<div class="abs" style="left:256px;top:613px;font-size:9.6px;color:#666;line-height:12px">Точно бот</div>
<div class="abs" style="left:256px;top:631px;font-size:9.6px;color:#666;line-height:12px">Вероятно бот</div>
<div class="abs" style="left:256px;top:650px;font-size:9.6px;color:#666;line-height:12px">Вероятно человек</div>
<div class="abs" style="left:481px;top:594px;font-size:9.6px;color:#666;line-height:12px;letter-spacing:0.25px;word-spacing:1.5px">Мин: <b style="color:#333">0</b> rps</div>
<div class="abs" style="left:587px;top:594px;font-size:9.6px;color:#666;line-height:12px;letter-spacing:0.25px;word-spacing:1.5px">Сред: <b style="color:#333">314.6</b> rps</div>
<div class="abs" style="left:692px;top:594px;font-size:9.6px;color:#666;line-height:12px;letter-spacing:0.25px;word-spacing:1.5px">Макс: <b style="color:#333">7408.3</b> rps</div>
<div class="abs" style="left:481px;top:613px;font-size:9.6px;color:#666;line-height:12px;letter-spacing:0.25px;word-spacing:1.5px">Мин: <b style="color:#333">0</b> rps</div>
<div class="abs" style="left:587px;top:613px;font-size:9.6px;color:#666;line-height:12px;letter-spacing:0.25px;word-spacing:1.5px">Сред: <b style="color:#333">313.06</b> rps</div>
<div class="abs" style="left:692px;top:613px;font-size:9.6px;color:#666;line-height:12px;letter-spacing:0.25px;word-spacing:1.5px">Макс: <b style="color:#333">11293.37</b> rps</div>
<div class="abs" style="left:481px;top:631px;font-size:9.6px;color:#666;line-height:12px;letter-spacing:0.25px;word-spacing:1.5px">Мин: <b style="color:#333">0</b> rps</div>
<div class="abs" style="left:587px;top:631px;font-size:9.6px;color:#666;line-height:12px;letter-spacing:0.25px;word-spacing:1.5px">Сред: <b style="color:#333">4481.58</b> rps</div>
<div class="abs" style="left:692px;top:631px;font-size:9.6px;color:#666;line-height:12px;letter-spacing:0.25px;word-spacing:1.5px">Макс: <b style="color:#333">115620</b> rps</div>
<div class="abs" style="left:481px;top:650px;font-size:9.6px;color:#666;line-height:12px;letter-spacing:0.25px;word-spacing:1.5px">Мин: <b style="color:#333">0</b> rps</div>
<div class="abs" style="left:587px;top:650px;font-size:9.6px;color:#666;line-height:12px;letter-spacing:0.25px;word-spacing:1.5px">Сред: <b style="color:#333">499.76</b> rps</div>
<div class="abs" style="left:692px;top:650px;font-size:9.6px;color:#666;line-height:12px;letter-spacing:0.25px;word-spacing:1.5px">Макс: <b style="color:#333">3821.3</b> rps</div>
</body></html>
